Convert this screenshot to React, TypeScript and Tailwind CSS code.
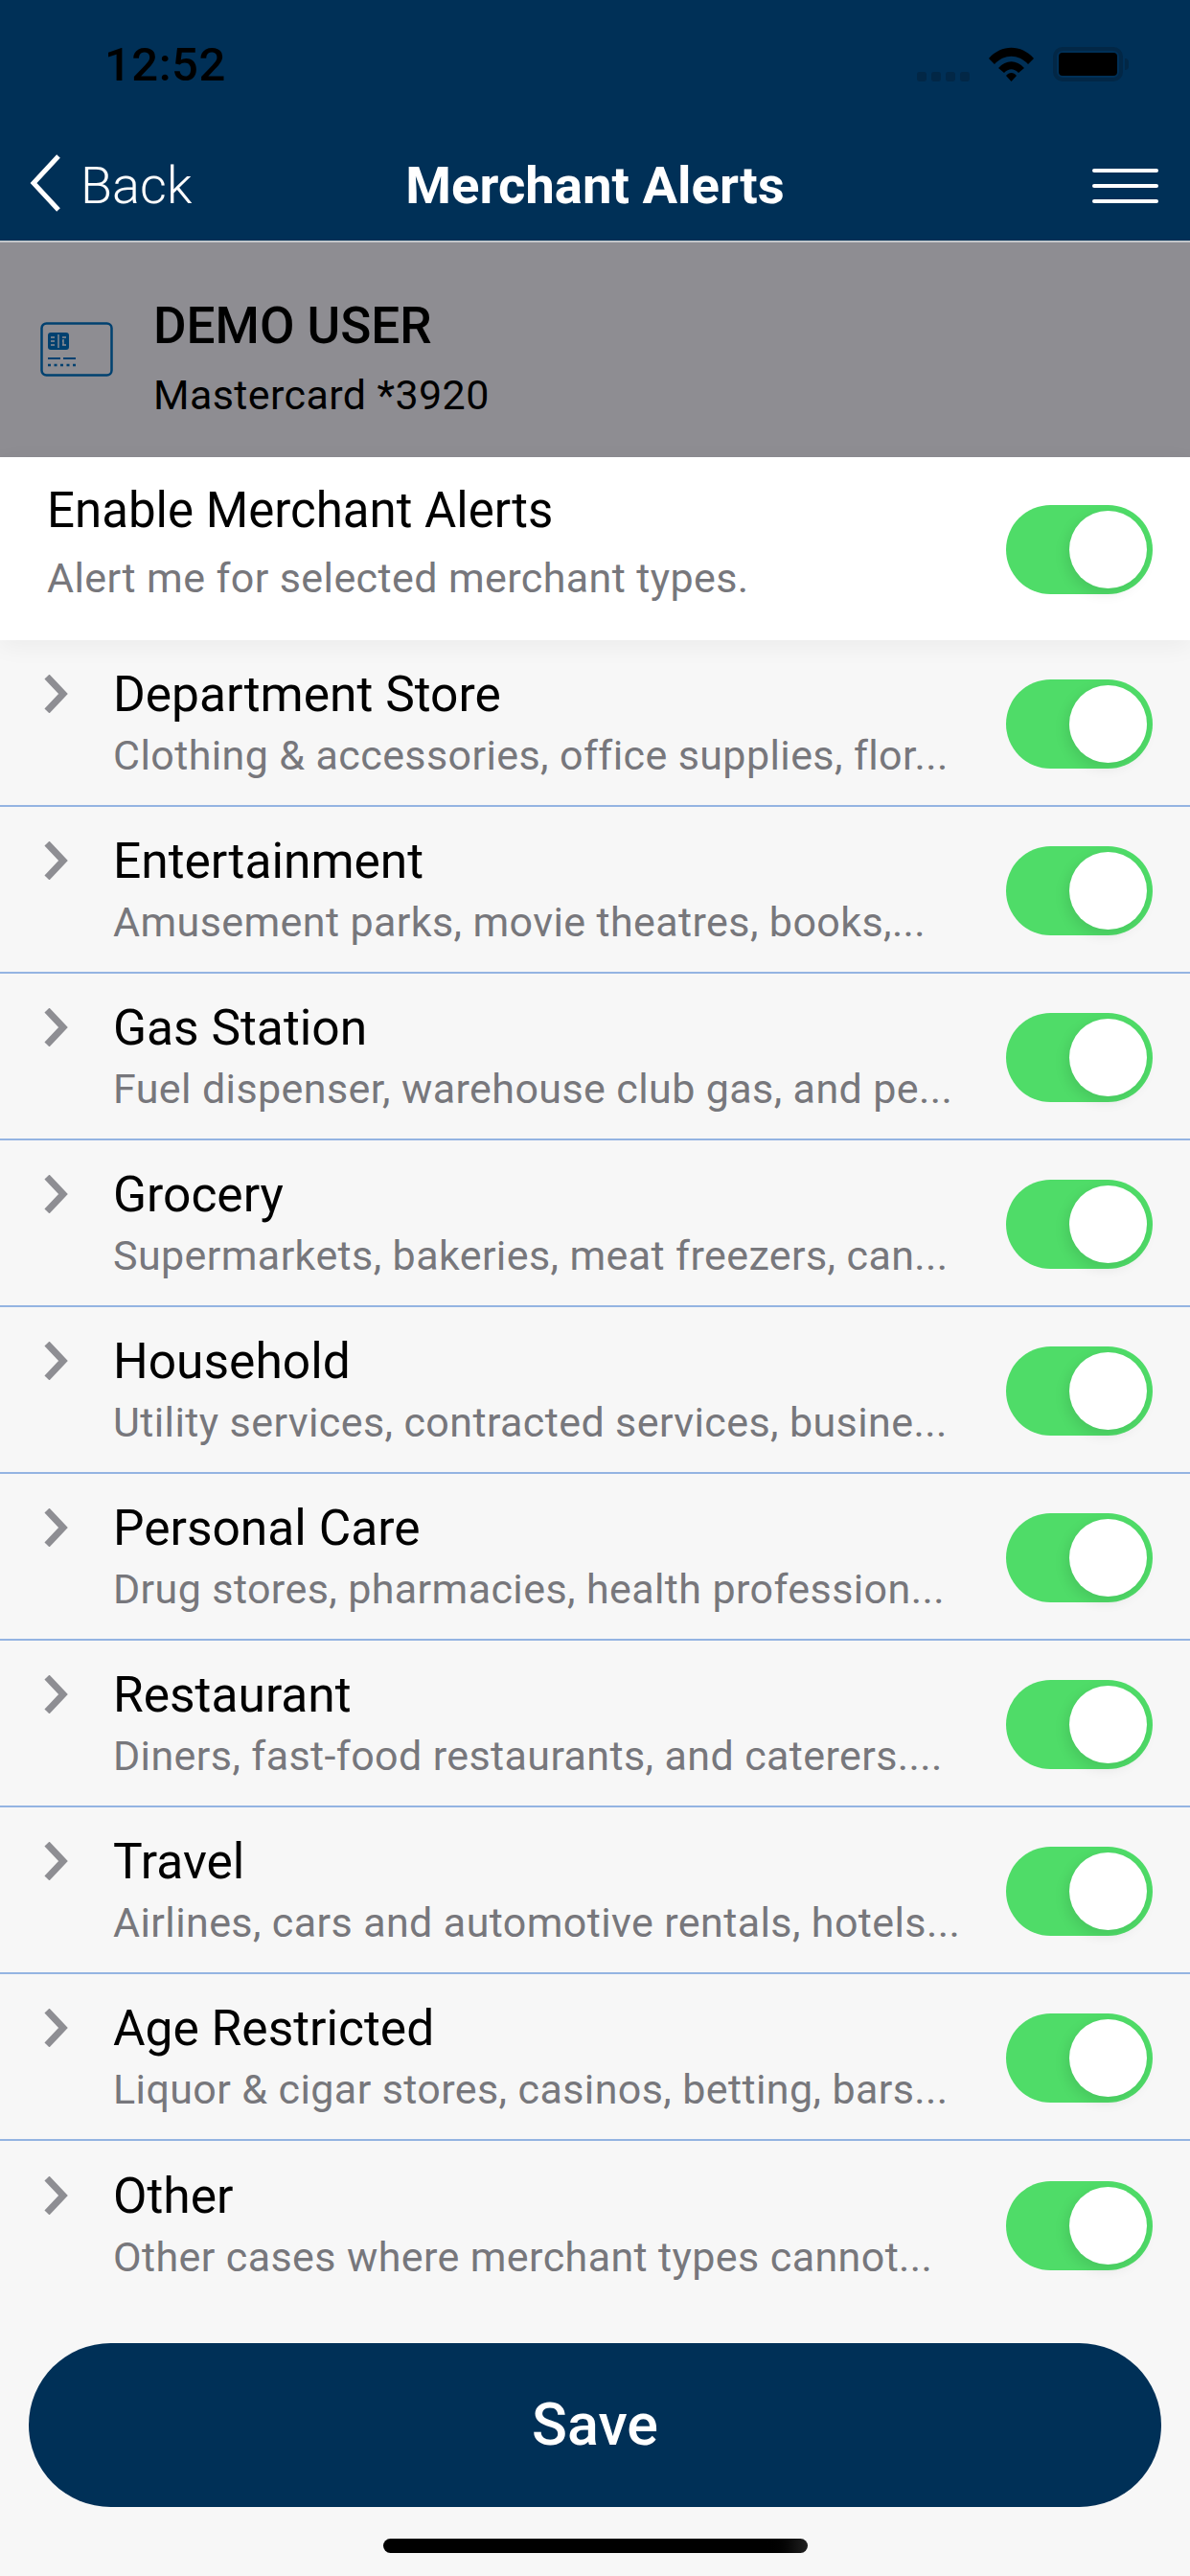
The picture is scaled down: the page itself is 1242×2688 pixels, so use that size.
const rows = [
  ["Department Store", "Clothing & accessories, office supplies, flor..."],
  ["Entertainment", "Amusement parks, movie theatres, books,..."],
  ["Gas Station", "Fuel dispenser, warehouse club gas, and pe..."],
  ["Grocery", "Supermarkets, bakeries, meat freezers, can..."],
  ["Household", "Utility services, contracted services, busine..."],
  ["Personal Care", "Drug stores, pharmacies, health profession..."],
  ["Restaurant", "Diners, fast-food restaurants, and caterers...."],
  ["Travel", "Airlines, cars and automotive rentals, hotels..."],
  ["Age Restricted", "Liquor & cigar stores, casinos, betting, bars..."],
  ["Other", "Other cases where merchant types cannot..."],
];

function Toggle() {
  return (
    <div className="flex h-[93px] w-[153px] shrink-0 items-center justify-end rounded-full bg-[#4fdc68] pr-[6px]">
      <div className="size-[81px] rounded-full bg-white shadow-[-3px_5px_14px_rgba(0,0,0,0.1)]" />
    </div>
  );
}

function Chevron() {
  return (
    <svg width="26" height="40" viewBox="0 0 26 40" className="shrink-0">
      <path d="M3 2 L20 20 L3 38" fill="none" stroke="#8e8e93" strokeWidth="7" />
    </svg>
  );
}

function CardIcon() {
  return (
    <svg width="76" height="58" viewBox="0 0 76 58" fill="none" stroke="#004170" className="shrink-0">
      <rect x="1.5" y="1.5" width="73" height="54" rx="5" strokeWidth="2.5" />
      <rect x="8" y="11" width="22" height="18" rx="3" fill="#004170" stroke="none" />
      <path d="M11 16h4M11 20h4M11 24h4M23 16h4M23 20h1.5M23 24h4M19 13v14M24 18v6" stroke="#8e8d92" strokeWidth="1.4" />
      <path d="M8 38h13M24 38h13" strokeWidth="2.2" />
      <path d="M8 45h30" strokeWidth="2.6" strokeDasharray="3 3.5" />
    </svg>
  );
}

export default function App() {
  return (
    <div className="flex h-[2688px] w-[1242px] flex-col overflow-hidden bg-[#f7f7f7] font-['Roboto',sans-serif] text-black">
      <header className="h-[253px] shrink-0 border-b-2 border-[#c2c5c9] bg-[#003057]">
        <div className="flex h-[136px] items-start justify-between pl-[109px] pr-[64px] pt-[41px]">
          <span className="text-[49px] font-medium leading-[54px] tracking-[0.5px] text-black">12:52</span>
          <div className="flex items-start pt-[8px]">
            <div className="mr-[20px] mt-[26px] flex gap-[5px]">
              {[0, 1, 2, 3].map((i) => (
                <span key={i} className="size-[10px] rounded-[3px] bg-[#022746]" />
              ))}
            </div>
            <svg width="47" height="36" viewBox="0 0 47 36" className="mr-[20px]">
              <path d="M0 12 C13 -3 34 -3 47 12 L41 18 C31 7 16 7 6 18Z" fill="#000" />
              <path d="M10 22 C18 13 29 13 37 22 L31 27 C26 22 21 22 16 27Z" fill="#000" />
              <path d="M18 30 C21 26 26 26 29 30 L23.5 36Z" fill="#000" />
            </svg>
            <div className="flex items-center">
              <div className="flex h-[36px] w-[73px] rounded-[10px] border-[4px] border-[#022746] p-[2px]">
                <div className="flex-1 rounded-[4px] bg-black" />
              </div>
              <div className="ml-[2px] h-[12px] w-[4px] rounded-r-full bg-[#022746]" />
            </div>
          </div>
        </div>
        <div className="relative flex h-[115px] items-start justify-between pl-[30px] pr-[30px] pt-[25px]">
          <div className="flex items-start gap-[20px]">
            <svg width="34" height="62" viewBox="0 0 34 62" className="mt-[-1px]">
              <path d="M31 3 L5 31 L31 59" fill="none" stroke="#fff" strokeWidth="5" />
            </svg>
            <span className="mt-[2px] text-[54px] font-light leading-[62px] text-white">Back</span>
          </div>
          <h1 className="absolute inset-x-0 top-[26px] text-center text-[54.5px] font-bold leading-[62px] text-white">
            Merchant Alerts
          </h1>
          <div className="mr-[3px] mt-[15px] flex w-[69px] flex-col gap-[12px]">
            <span className="h-[4px] rounded-full bg-white" />
            <span className="h-[4px] rounded-full bg-white" />
            <span className="h-[4px] rounded-full bg-white" />
          </div>
        </div>
      </header>

      <section className="flex h-[224px] shrink-0 items-center gap-[42px] bg-[#8e8d92] pl-[42px]">
        <CardIcon />
        <div className="mt-[17px]">
          <div className="text-[53px] font-medium leading-[60px]">DEMO USER</div>
          <div className="mt-[17px] text-[43px] leading-[50px] tracking-[0.4px]">Mastercard *3920</div>
        </div>
      </section>

      <section className="flex h-[191px] shrink-0 items-center justify-between bg-white pl-[49px] pr-[39px] pt-[2px] shadow-[0_6px_24px_rgba(0,0,0,0.05)]">
        <div className="-mt-[18px]">
          <div className="text-[51px] leading-[60px]">Enable Merchant Alerts</div>
          <div className="mt-[16px] text-[43px] leading-[48px] tracking-[0.4px] text-[#77777c]">
            Alert me for selected merchant types.
          </div>
        </div>
        <Toggle />
      </section>

      <div className="flex flex-col">
        {rows.map(([title, sub], i) => (
          <div
            key={title}
            className={`flex h-[174px] items-center justify-between pl-[46px] pr-[39px] pt-[3px] ${i < rows.length - 1 ? "border-b-2 border-[#94b4e2]" : ""}`}
          >
            <div className="-mt-[4px] flex min-w-0 items-start">
              <div className="w-[72px] shrink-0 pt-[9px]">
                <Chevron />
              </div>
              <div>
                <div className="text-[51.5px] leading-[60px]">{title}</div>
                <div className="mt-[9px] text-[43px] leading-[48px] tracking-[0.4px] text-[#77777c]">{sub}</div>
              </div>
            </div>
            <Toggle />
          </div>
        ))}
      </div>

      <div className="mt-auto px-[30px]">
        <button className="h-[171px] w-full rounded-full bg-[#003057] text-[61px] font-medium text-white">Save</button>
        <div className="mx-auto mb-[24px] mt-[33px] h-[15px] w-[443px] rounded-full bg-gradient-to-r from-black from-90% to-[#222]" />
      </div>
    </div>
  );
}
